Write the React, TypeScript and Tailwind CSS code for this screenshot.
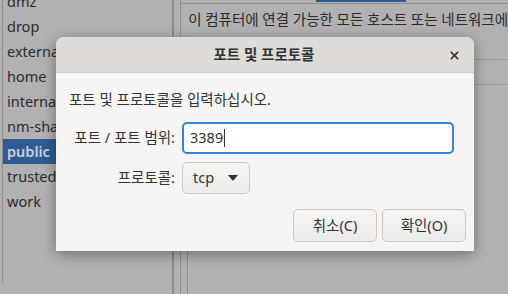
import { X } from "lucide-react";

const zones = ["dmz", "drop", "external", "home", "internal", "nm-shared", "public", "trusted", "work"];

const font = { fontFamily: '"Noto Sans", "Noto Sans CJK KR", sans-serif' };

export default function App() {
  return (
    <div className="relative w-[508px] h-[294px] overflow-hidden bg-[#b1b1b1] text-[#2b2b2b] text-[14.5px]" style={font}>
      <div className="flex h-full">
        {/* zone list */}
        <div className="w-[179px] h-full pl-[2px]">
          <div className="h-full border-l border-[#8f8f8f] -mt-[11px]">
            {zones.map((z) => (
              <div
                key={z}
                className={`h-[25px] leading-[25px] pl-[4px] ${z === "public" ? "bg-[#2f5b95] text-[#c9d2dd] font-semibold" : ""}`}
              >
                {z}
              </div>
            ))}
          </div>
        </div>
        <div className="w-[2px] h-full bg-[#8c8a88]" />
        <div className="w-[6px]" />
        {/* right pane */}
        <div className="relative flex-1 h-full border-l border-[#8f8f8f]">
          <div className="absolute left-[135px] top-0 w-[90px] h-[2px] bg-[#2f5b95]" />
          <div className="mt-[3px] h-full border-t border-[#8f8f8f] flex flex-col">
            <div className="h-[32px] flex items-center pl-[7px] whitespace-nowrap text-[14.5px]">
              이 컴퓨터에 연결 가능한 모든 호스트 또는 네트워크에
            </div>
            <div className="flex-1 ml-[6px] border-l border-[#8f8f8f] flex flex-col">
              <div className="h-[24px] border-b border-[#999]" />
              <div className="h-[25px] border-b border-[#999]" />
            </div>
          </div>
        </div>
      </div>

      {/* dialog */}
      <div className="absolute left-[56px] top-[37px] w-[418px] h-[214px] rounded-t-[8px] bg-[#f6f5f4] shadow-[0_3px_14px_rgba(0,0,0,0.38)] flex flex-col text-[#2e3436]">
        <div className="relative h-[36px] rounded-t-[8px] bg-[#dfdcd8] border-b border-[#cfcac5] flex items-center justify-center">
          <span className="font-bold text-[14.5px] -ml-[2px]">포트 및 프로토콜</span>
          <X size={13} strokeWidth={3.2} className="absolute right-[13px] top-[12px] text-[#2e3436]" />
        </div>
        <div className="flex-1 flex flex-col pl-[13px] pr-[8px]">
          <div className="mt-[17px] leading-[18px]">포트 및 프로토콜을 입력하십시오.</div>
          <div className="mt-[14px] grid grid-cols-[106px_272px] gap-x-[7px] gap-y-[8px] items-center">
            <div className="text-right">포트 / 포트 범위:</div>
            <div className="h-[32px] rounded-[5px] border-2 border-[#3584e4] bg-white flex items-center pl-[6px]">
              <span>3389</span>
              <span className="ml-[1px] w-[1px] h-[18px] bg-[#2e3436]" />
            </div>
            <div className="text-right">프로토콜:</div>
            <div className="w-[68px] h-[32px] rounded-[5px] border border-[#cdc7c2] bg-gradient-to-b from-[#f6f5f4] to-[#edebe9] flex items-center pl-[10px] gap-[14px]">
              <span>tcp</span>
              <svg width="10" height="6" viewBox="0 0 10 6">
                <path d="M0 0 L10 0 L5 6 Z" fill="#2e3436" />
              </svg>
            </div>
          </div>
          <div className="mt-[15px] flex justify-end gap-[5px]">
            <button className="w-[84px] h-[33px] rounded-[5px] border border-[#cdc7c2] bg-gradient-to-b from-[#f6f5f4] to-[#edebe9]">취소(C)</button>
            <button className="w-[84px] h-[33px] rounded-[5px] border border-[#cdc7c2] bg-gradient-to-b from-[#f6f5f4] to-[#edebe9]">확인(O)</button>
          </div>
        </div>
      </div>
    </div>
  );
}
